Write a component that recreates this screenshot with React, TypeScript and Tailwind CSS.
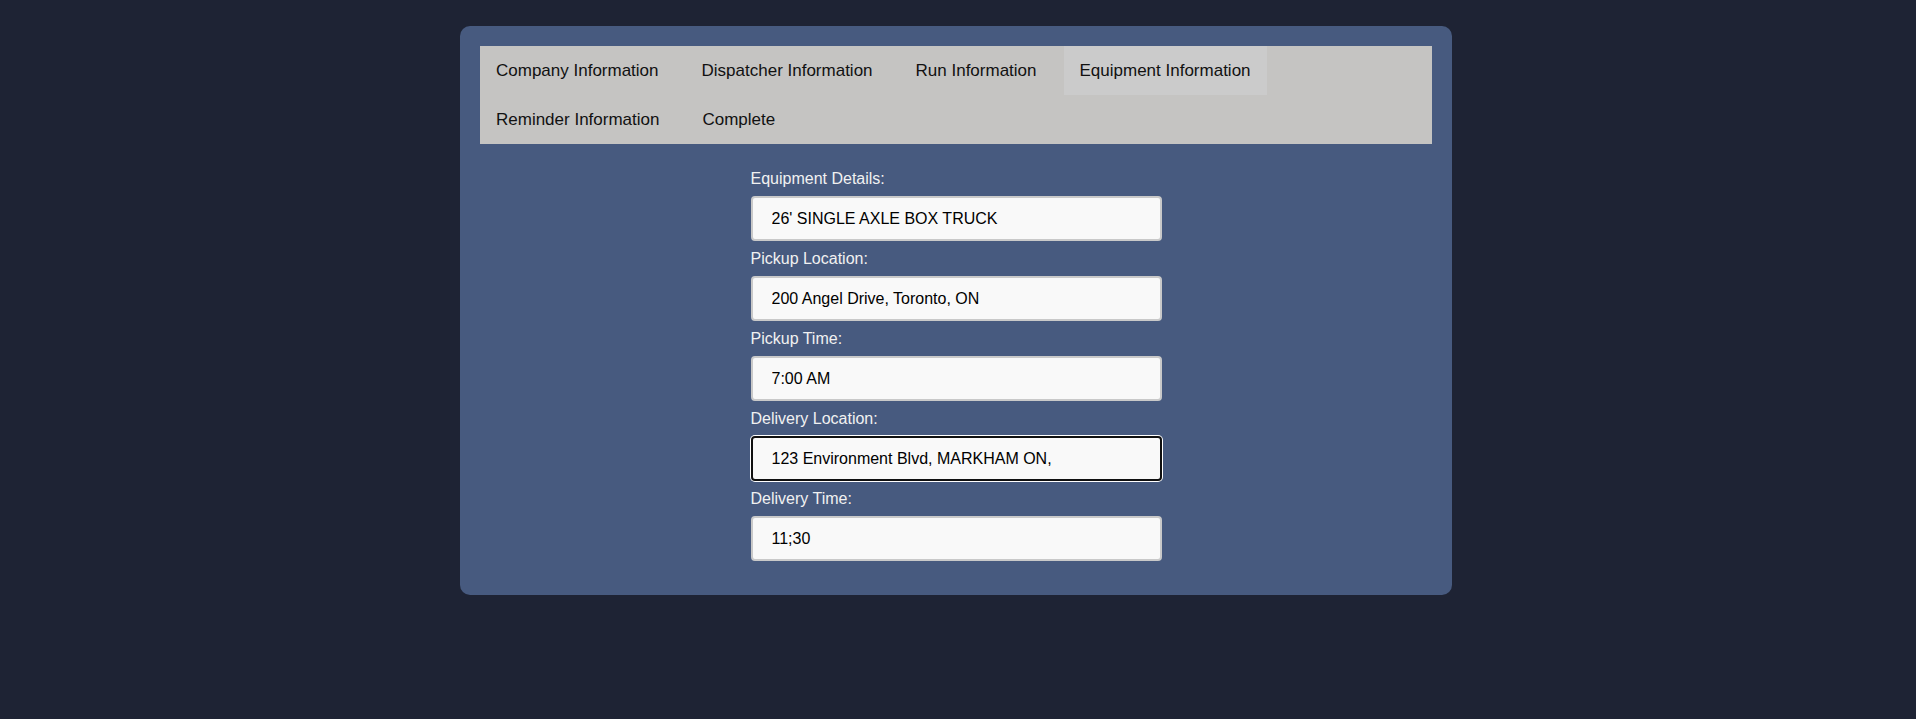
import { useState } from 'react';
import clsx from 'clsx';

const tabs = [
  'Company Information',
  'Dispatcher Information',
  'Run Information',
  'Equipment Information',
  'Reminder Information',
  'Complete',
];

const fields = [
  { label: 'Equipment Details:', value: "26' SINGLE AXLE BOX TRUCK" },
  { label: 'Pickup Location:', value: '200 Angel Drive, Toronto, ON' },
  { label: 'Pickup Time:', value: '7:00 AM' },
  { label: 'Delivery Location:', value: '123 Environment Blvd, MARKHAM ON,', focused: true },
  { label: 'Delivery Time:', value: '11;30' },
];

function App() {
  const [active, setActive] = useState('Equipment Information');

  return (
    <div className="min-h-screen bg-[#1e2334] pt-[26px] font-['Liberation_Sans',Arial,sans-serif]">
      <div className="ml-[460px] w-[992px] rounded-[10px] bg-[#475a7f] px-5 pt-5 pb-[34px]">
        <div className="flex flex-wrap gap-x-[11px] bg-[#c5c4c2] pr-[120px]">
          {tabs.map((tab) => (
            <button
              key={tab}
              onClick={() => setActive(tab)}
              className={clsx(
                'h-[49px] px-4 text-[17px] text-[#111]',
                active === tab ? 'bg-[#cbcbcb]' : 'bg-transparent'
              )}
            >
              {tab}
            </button>
          ))}
        </div>

        <form className="mx-auto w-[411px] pt-[26px]">
          {fields.map((f, i) => (
            <div key={f.label}>
              <label className="mb-[8px] block text-[16px] leading-[18px] text-[#f1f1f1]">
                {f.label}
              </label>
              <input
                defaultValue={f.value}
                className={clsx(
                  'block h-[45px] w-full rounded-[4px] bg-[#f9f9f9] pl-[19px] text-[16px] text-black outline-none',
                  i < fields.length - 1 && 'mb-[9px]',
                  f.focused
                    ? 'border-2 border-[#101010] shadow-[0_0_0_1px_#ffffff]'
                    : 'border-2 border-[#c9c9c9]'
                )}
              />
            </div>
          ))}
        </form>
      </div>
    </div>
  );
}

export default App;
